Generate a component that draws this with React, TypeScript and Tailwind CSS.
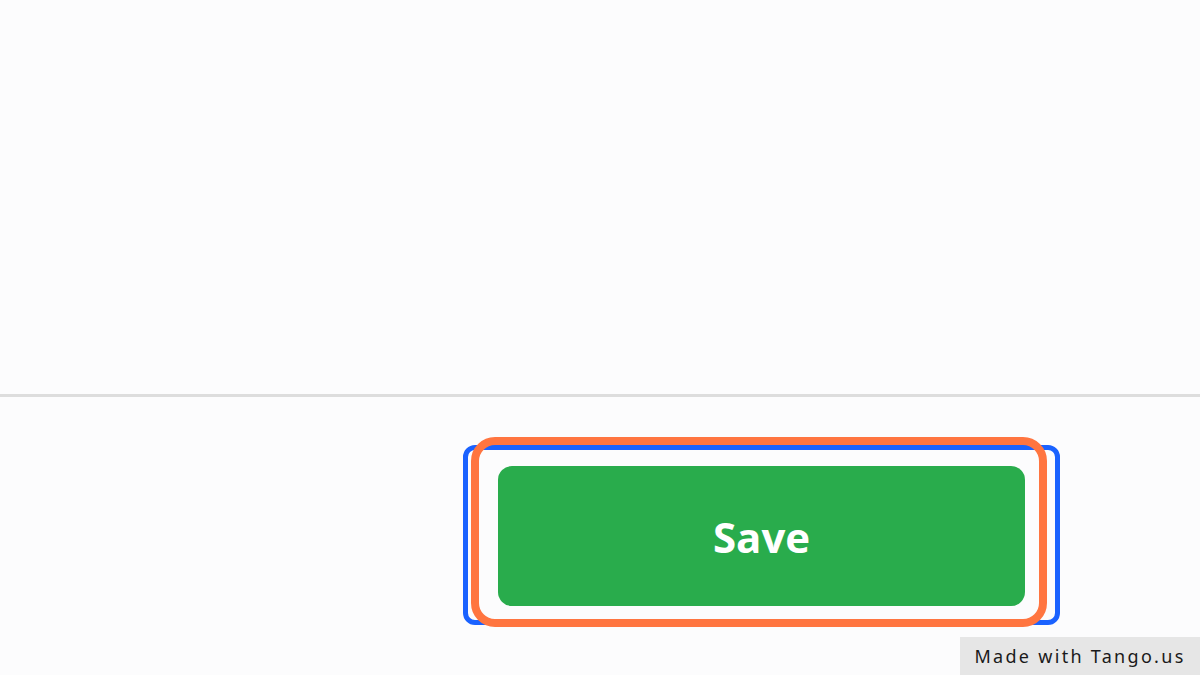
export default function App() {
  return (
    <div className="relative flex h-[675px] w-[1200px] flex-col overflow-hidden bg-[#fcfcfd] font-['Open_Sans',sans-serif]">
      {/* Upper content area */}
      <div className="h-[394px] shrink-0" />
      <div className="h-[3px] shrink-0 bg-[#dddddd]" />

      {/* Footer with action */}
      <div className="flex flex-1 items-start pl-[498px] pt-[69px]">
        <div className="relative">
          <button
            type="button"
            className="flex h-[140px] w-[527px] items-center justify-center rounded-[14px] bg-[#29ac4c] text-[42px] font-bold text-white"
          >
            Save
          </button>
          {/* Tango highlight frames */}
          <div className="pointer-events-none absolute left-[-35px] top-[-21px] h-[180px] w-[597px] rounded-[12px] border-[5px] border-[#1a62ff]" />
          <div className="pointer-events-none absolute left-[-27px] top-[-29px] h-[190px] w-[576px] rounded-[24px] border-[8px] border-[#ff7540]" />
        </div>
      </div>

      <div className="absolute bottom-0 right-0 flex h-[38px] w-[240px] items-center justify-center bg-[#e6e6e6] font-['Noto_Sans',sans-serif] text-[18px] tracking-[2.3px] text-[#1a1a1a]">
        Made with Tango.us
      </div>
    </div>
  );
}
